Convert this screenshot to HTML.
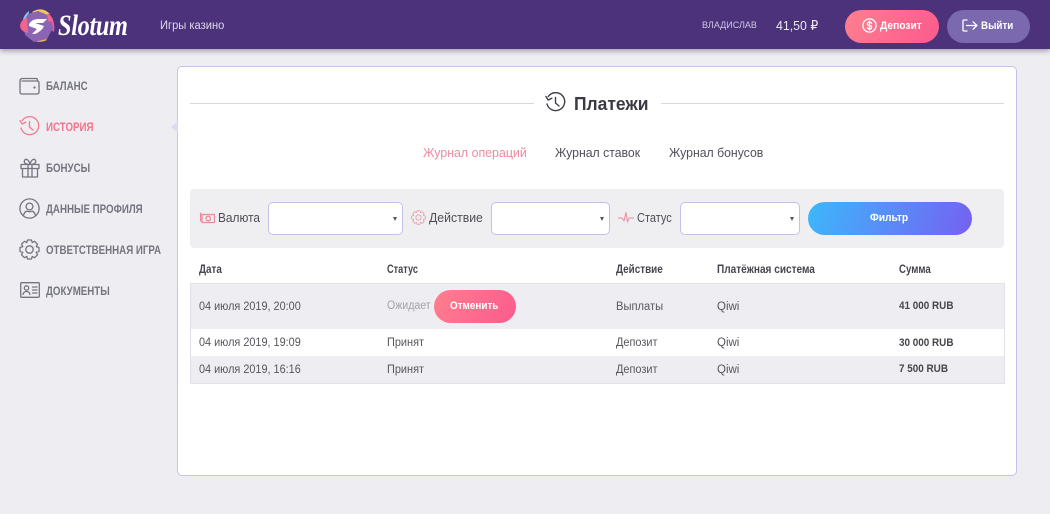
<!DOCTYPE html>
<html lang="ru"><head><meta charset="utf-8"><title>Slotum</title>
<style>
*{box-sizing:border-box}
html,body{margin:0;padding:0}
body{width:1050px;height:514px;position:relative;overflow:hidden;background:#eeeef2;font-family:"Liberation Sans","DejaVu Sans",sans-serif;color:#4a4a52}
.a{position:absolute;white-space:nowrap;transform-origin:0 50%}
header{position:absolute;left:0;top:0;width:1050px;height:49px;background:#4b327b;box-shadow:0 2px 5px rgba(40,30,70,.4)}
.side{font-size:11.5px;font-weight:bold;color:#74747f;left:46px;line-height:14px;transform:scaleX(.845)}
.ic{position:absolute;fill:none;stroke:#74747f;stroke-width:1.3;stroke-linecap:round;stroke-linejoin:round}
.sel{position:absolute;top:202px;height:33px;background:#fff;border:1px solid #c4c0ea;border-radius:5px}
.sel i{position:absolute;right:5px;top:14px;width:0;height:0;border-left:2.5px solid transparent;border-right:2.5px solid transparent;border-top:4px solid #555}
.lab{font-size:12.5px;color:#4e4e56;line-height:16px;top:210px}
.th{font-size:11.5px;font-weight:bold;color:#45454d;top:263px;line-height:14px;transform:scaleX(.86)}
.td{font-size:11.5px;color:#55555d;line-height:14px}
.dt{transform:scaleX(.945)}
.b{font-weight:bold;font-size:11px;color:#45454d;transform:scaleX(.9)}
</style></head><body>
<header>
<svg style="position:absolute;left:20px;top:8px" width="36" height="36" viewBox="0 0 36 36">
<path d="M12 4 Q22-2 30 6 L24 10Z" fill="#f4c857"/><path d="M28 5 Q36 12 34 24 L28 20Z" fill="#e9559b"/><path d="M8 29 Q16 37 27 32 L22 27Z" fill="#f2bb4c"/><path d="M9 3 Q2 8 3 16 L8 14Z" fill="#7ccbe0"/>
<path d="M18 3 L30 8 L33 20 L27 31 L14 34 L5 27 L3 15 L8 6Z" fill="#8c64b4"/>
<path d="M0 18 Q1 11 7 10 L8 25 Q1 24 0 18Z" fill="#f0668c"/><path d="M27 6 Q33 8 33 14 L28 13Z" fill="#f0668c"/>
<path d="M9 16 Q12 11 18 11 L27 11 L23 15 L15 15 L24 18 Q22 23 15 26 L12 26 L17 21 L9 18Z" fill="#fff"/>
</svg>
<div class="a" style="left:58px;top:9px;font:italic bold 30px/34px 'Liberation Serif',serif;color:#fff;transform:scaleX(.81);letter-spacing:-.4px">Slotum</div>
<div class="a" style="left:160px;top:19px;font-size:11.5px;line-height:14px;color:#ddd8ea;transform:scaleX(.97)">Игры казино</div>
<div class="a" style="left:702px;top:20px;font-size:9.5px;line-height:12px;color:#cfc9e0;transform:scaleX(.95)">ВЛАДИСЛАВ</div>
<div class="a" style="left:776px;top:18px;font-size:13px;line-height:16px;color:#eeeaf5;transform:scaleX(.95)">41,50 ₽</div>
<div class="a" style="left:845px;top:10px;width:94px;height:33px;border-radius:17px;background:linear-gradient(120deg,#ff7f8e,#fb5a8d)"></div>
<svg class="ic" style="left:862px;top:18px;stroke:#fff" width="15" height="15" viewBox="0 0 15 15"><circle cx="7.5" cy="7.5" r="6.6"/><path d="M9.6 5.3Q9 4 7.5 4 5.4 4 5.4 5.7T7.5 7.5 9.6 9.3 7.5 11Q6 11 5.4 9.7M7.5 3v9"/></svg>
<div class="a" style="left:880px;top:20px;font-size:11px;font-weight:bold;line-height:13px;color:#fff;transform:scaleX(.93)">Депозит</div>
<div class="a" style="left:947px;top:10px;width:83px;height:33px;border-radius:17px;background:#7a69ae"></div>
<svg class="ic" style="left:962px;top:19px;stroke:#fff" width="16" height="13" viewBox="0 0 16 13"><path d="M5 1H2Q1 1 1 2V11Q1 12 2 12H5M4.5 6.5H15M11 2.8 15 6.5 11 10.2"/></svg>
<div class="a" style="left:981px;top:20px;font-size:11px;font-weight:bold;line-height:13px;color:#fff;transform:scaleX(.89)">Выйти</div>
</header>

<svg class="ic" style="left:19px;top:77px" width="21" height="18" viewBox="0 0 21 18"><path d="M3 1.5H17Q18.5 1.5 18.5 3V4M2.5 1.8Q1 2.3 1 4V15Q1 17 3 17H18Q20 17 20 15V6Q20 4 18 4H3"/><circle cx="15.5" cy="10.5" r=".5" fill="#74747f"/></svg>
<div class="a side" style="top:80px">БАЛАНС</div>
<svg class="ic" style="left:19px;top:116px;stroke:#f2798f" width="21" height="21" viewBox="0 0 21 21"><path d="M3.3 4.5A9 9 0 1 1 2 12M1 4.5 3.2 8 6.8 6.2M10.5 5.5V11L14 14"/></svg>
<div class="a side" style="top:121px;color:#f2738c">ИСТОРИЯ</div>
<svg class="ic" style="left:20px;top:158px" width="20" height="20" viewBox="0 0 20 20"><path d="M1 6.5H19V10.5H1ZM2.5 10.5V19H17.5V10.5M8 6.5V19M12 6.5V19M10 6.5C6 6.5 3.5 5 4.5 2.5S9 1.5 10 6.5C11 1.5 14.5 0 15.5 2.5S14 6.5 10 6.5Z"/></svg>
<div class="a side" style="top:162px">БОНУСЫ</div>
<svg class="ic" style="left:19px;top:198px" width="21" height="21" viewBox="0 0 21 21"><circle cx="10.5" cy="10.5" r="9.6"/><circle cx="10.5" cy="8.5" r="3.4"/><path d="M4.5 17.5Q5.5 13.5 8 13.2 10.5 14.2 13 13.2 15.5 13.5 16.5 17.5"/></svg>
<div class="a side" style="top:203px">ДАННЫЕ ПРОФИЛЯ</div>
<svg class="ic" style="left:19px;top:239px" width="21" height="21" viewBox="0 0 21 21"><circle cx="10.5" cy="10.5" r="3.7"/><path d="M8.5 1H12.5L13.2 3.6 15.6 2.3 18.5 5.2 17.2 7.6 20 8.5V12.5L17.2 13.3 18.5 15.8 15.6 18.7 13.2 17.4 12.5 20H8.5L7.8 17.4 5.4 18.7 2.5 15.8 3.8 13.3 1 12.5V8.5L3.8 7.6 2.5 5.2 5.4 2.3 7.8 3.6Z"/></svg>
<div class="a side" style="top:244px">ОТВЕТСТВЕННАЯ ИГРА</div>
<svg class="ic" style="left:20px;top:282px" width="20" height="16" viewBox="0 0 20 16"><rect x=".7" y=".7" width="18.6" height="14.6" rx="1"/><circle cx="6.5" cy="6" r="2.2"/><path d="M3 12.5Q3.5 9.5 6.5 9.5T10 12.5M12.5 5H17M12.5 8H17M12.5 11H17"/></svg>
<div class="a side" style="top:285px">ДОКУМЕНТЫ</div>

<div class="a" style="left:177px;top:66px;width:840px;height:410px;background:#fff;border:1px solid #c6c2ec;border-radius:5px"></div>
<div class="a" style="left:171px;top:121px;width:0;height:0;border-top:6px solid transparent;border-bottom:6px solid transparent;border-right:7px solid #dcdaf2"></div>

<div class="a" style="left:190px;top:103px;width:344px;height:1px;background:#d9d9dd"></div>
<div class="a" style="left:661px;top:103px;width:343px;height:1px;background:#d9d9dd"></div>
<svg class="ic" style="left:545px;top:92px;stroke:#3f3f47;stroke-width:1.4" width="21" height="21" viewBox="0 0 21 21"><path d="M3.3 4.5A9 9 0 1 1 2 12M1 4.5 3.2 8 6.8 6.2M10.5 5.5V11L14 14"/></svg>
<div class="a" style="left:574px;top:93px;font-size:18px;font-weight:bold;line-height:22px;color:#3a3a42;transform:scaleX(.97)">Платежи</div>

<div class="a" style="left:423px;top:145px;font-size:12.5px;line-height:16px;color:#ee8aa2;transform:scaleX(.99)">Журнал операций</div>
<div class="a" style="left:555px;top:145px;font-size:12.5px;line-height:16px;color:#50505a;transform:scaleX(.98)">Журнал ставок</div>
<div class="a" style="left:669px;top:145px;font-size:12.5px;line-height:16px;color:#50505a;transform:scaleX(.98)">Журнал бонусов</div>

<div class="a" style="left:190px;top:189px;width:814px;height:59px;background:#efeff2;border-radius:4px"></div>
<svg class="ic" style="left:200px;top:212px;stroke:#ee8a9c" width="15" height="12" viewBox="0 0 15 12"><path d="M2 2.5H14.5V10.5H2Z"/><path d="M.6 1V9"/><circle cx="8.2" cy="6.5" r="2.3"/></svg>
<div class="a lab" style="left:218px;transform:scaleX(.95)">Валюта</div>
<div class="sel" style="left:268px;width:135px"><i></i></div>
<svg class="ic" style="left:411px;top:210px;stroke:#ee8a9c;stroke-width:1" width="15" height="15" viewBox="0 0 21 21"><circle cx="10.5" cy="10.5" r="3.7"/><path d="M8.5 1H12.5L13.2 3.6 15.6 2.3 18.5 5.2 17.2 7.6 20 8.5V12.5L17.2 13.3 18.5 15.8 15.6 18.7 13.2 17.4 12.5 20H8.5L7.8 17.4 5.4 18.7 2.5 15.8 3.8 13.3 1 12.5V8.5L3.8 7.6 2.5 5.2 5.4 2.3 7.8 3.6Z"/></svg>
<div class="a lab" style="left:429px;transform:scaleX(.98)">Действие</div>
<div class="sel" style="left:491px;width:119px"><i></i></div>
<svg class="ic" style="left:618px;top:211px;stroke:#ee8a9c;stroke-width:1" width="16" height="13" viewBox="0 0 16 13"><path d="M0 7H4L6 10 8 1.5 9.5 11 11 7H16"/></svg>
<div class="a lab" style="left:637px;transform:scaleX(.88)">Статус</div>
<div class="sel" style="left:680px;width:120px"><i></i></div>
<div class="a" style="left:808px;top:202px;width:164px;height:33px;border-radius:17px;background:linear-gradient(110deg,#3cb8fb,#7560f2)"></div>
<div class="a" style="left:870px;top:211px;font-size:11px;font-weight:bold;line-height:14px;color:#fff;transform:scaleX(.93)">Фильтр</div>

<div class="a th" style="left:199px">Дата</div>
<div class="a th" style="left:387px;transform:scaleX(.8)">Статус</div>
<div class="a th" style="left:616px">Действие</div>
<div class="a th" style="left:717px;transform:scaleX(.875)">Платёжная система</div>
<div class="a th" style="left:899px;transform:scaleX(.84)">Сумма</div>

<div class="a" style="left:190px;top:283px;width:815px;height:46px;background:#eeeef2;border:1px solid #e1e1e7;border-bottom:0"></div>
<div class="a" style="left:190px;top:329px;width:815px;height:27px;background:#fff;border-left:1px solid #e1e1e7;border-right:1px solid #e1e1e7"></div>
<div class="a" style="left:190px;top:356px;width:815px;height:28px;background:#eeeef2;border:1px solid #e1e1e7;border-top:0"></div>

<div class="a td dt" style="left:199px;top:300px">04 июля 2019, 20:00</div>
<div class="a td" style="left:387px;top:299px;color:#a2a2aa;transform:scaleX(.92)">Ожидает</div>
<div class="a" style="left:434px;top:290px;width:82px;height:33px;border-radius:17px;background:linear-gradient(120deg,#ff7f8e,#fb5a8d)"></div>
<div class="a" style="left:450px;top:299px;font-size:11px;font-weight:bold;line-height:14px;color:#fff;transform:scaleX(.9)">Отменить</div>
<div class="a td" style="left:616px;top:300px;transform:scaleX(.97)">Выплаты</div>
<div class="a td" style="left:717px;top:300px">Qiwi</div>
<div class="a td b" style="left:899px;top:299px">41 000 RUB</div>

<div class="a td dt" style="left:199px;top:336px">04 июля 2019, 19:09</div>
<div class="a td" style="left:387px;top:336px;transform:scaleX(.95)">Принят</div>
<div class="a td" style="left:616px;top:336px;transform:scaleX(.95)">Депозит</div>
<div class="a td" style="left:717px;top:336px">Qiwi</div>
<div class="a td b" style="left:899px;top:336px">30 000 RUB</div>

<div class="a td dt" style="left:199px;top:363px">04 июля 2019, 16:16</div>
<div class="a td" style="left:387px;top:363px;transform:scaleX(.95)">Принят</div>
<div class="a td" style="left:616px;top:363px;transform:scaleX(.95)">Депозит</div>
<div class="a td" style="left:717px;top:363px">Qiwi</div>
<div class="a td b" style="left:899px;top:362px">7 500 RUB</div>
</body></html>
